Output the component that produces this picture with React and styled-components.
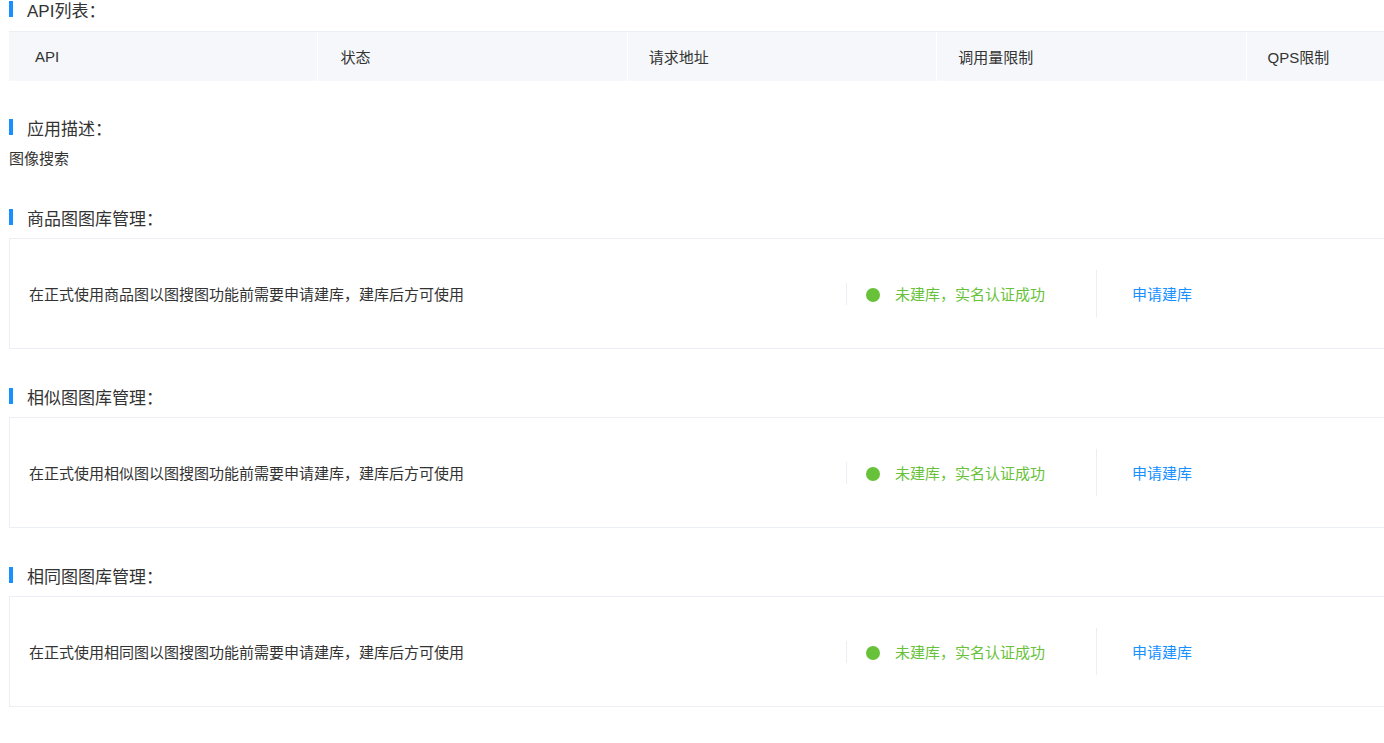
import React from 'react';
import styled, { createGlobalStyle } from 'styled-components';

const GlobalStyle = createGlobalStyle`
    html, body {
        margin: 0;
        padding: 0;
        background: #fff;
        overflow: hidden;
    }
    body {
        font-family: "Liberation Sans", "Noto Sans CJK SC", sans-serif;
        color: #333;
    }
`;

const Page = styled.div`
    padding-left: 9px;
    width: 1560px;
`;

const Title = styled.div`
    display: flex;
    align-items: center;
    height: 18px;
    margin-top: ${props => props.top || 0}px;
    font-size: 17px;
    color: #333;

    &::before {
        content: "";
        display: block;
        width: 4px;
        height: 16px;
        background: #1890ff;
        margin-right: 14px;
    }
`;

const Table = styled.div`
    margin-top: 13px;
    display: grid;
    grid-template-columns: repeat(5, 309.4px);
    border-top: 1px solid #ebeef5;
    background: #f5f7fa;
`;

const HeadCell = styled.div`
    height: 49px;
    display: flex;
    align-items: center;
    padding-left: ${props => props.pad || 21}px;
    border-right: 1px solid #fff;
    font-size: 15px;
    color: #333;
`;

const Desc = styled.div`
    margin-top: 14px;
    line-height: 18px;
    font-size: 15px;
    color: #333;
`;

const Card = styled.div`
    margin-top: 12px;
    height: 109px;
    border: 1px solid #ebeef5;
    display: flex;
    align-items: center;
    padding-left: 19px;
`;

const CardText = styled.div`
    width: 817px;
    font-size: 15px;
    color: #333;
`;

const StatusCell = styled.div`
    width: 230px;
    height: 22px;
    border-left: 1px solid #ebeef5;
    padding-left: 19px;
    display: flex;
    align-items: center;
    font-size: 15px;
    color: #67c23a;
`;

const Dot = styled.span`
    width: 14px;
    height: 14px;
    border-radius: 50%;
    background: #67c23a;
    margin-right: 15px;
    margin-top: 2px;
`;

const ActionCell = styled.div`
    height: 47px;
    border-left: 1px solid #ebeef5;
    padding-left: 35px;
    display: flex;
    align-items: center;
`;

const ApplyLink = styled.a`
    font-size: 15px;
    color: #1890ff;
    text-decoration: none;
    cursor: pointer;
`;

const columns = [
    { label: 'API', pad: 26 },
    { label: '状态', pad: 22 },
    { label: '请求地址', pad: 21 },
    { label: '调用量限制', pad: 21 },
    { label: 'QPS限制', pad: 21 },
];

const libraries = ['商品图', '相似图', '相同图'];

function LibraryCard({ name, top }) {
    return (
        <>
            <Title top={top}>{name}图库管理：</Title>
            <Card>
                <CardText>在正式使用{name}以图搜图功能前需要申请建库，建库后方可使用</CardText>
                <StatusCell>
                    <Dot />
                    未建库，实名认证成功
                </StatusCell>
                <ActionCell>
                    <ApplyLink>申请建库</ApplyLink>
                </ActionCell>
            </Card>
        </>
    );
}

export default function App() {
    return (
        <Page>
            <GlobalStyle />
            <Title>API列表：</Title>
            <Table>
                {columns.map(c => (
                    <HeadCell key={c.label} pad={c.pad}>{c.label}</HeadCell>
                ))}
            </Table>

            <Title top={37}>应用描述：</Title>
            <Desc>图像搜索</Desc>

            {libraries.map((name, i) => (
                <LibraryCard key={name} name={name} top={i === 0 ? 40 : 38} />
            ))}
        </Page>
    );
}
